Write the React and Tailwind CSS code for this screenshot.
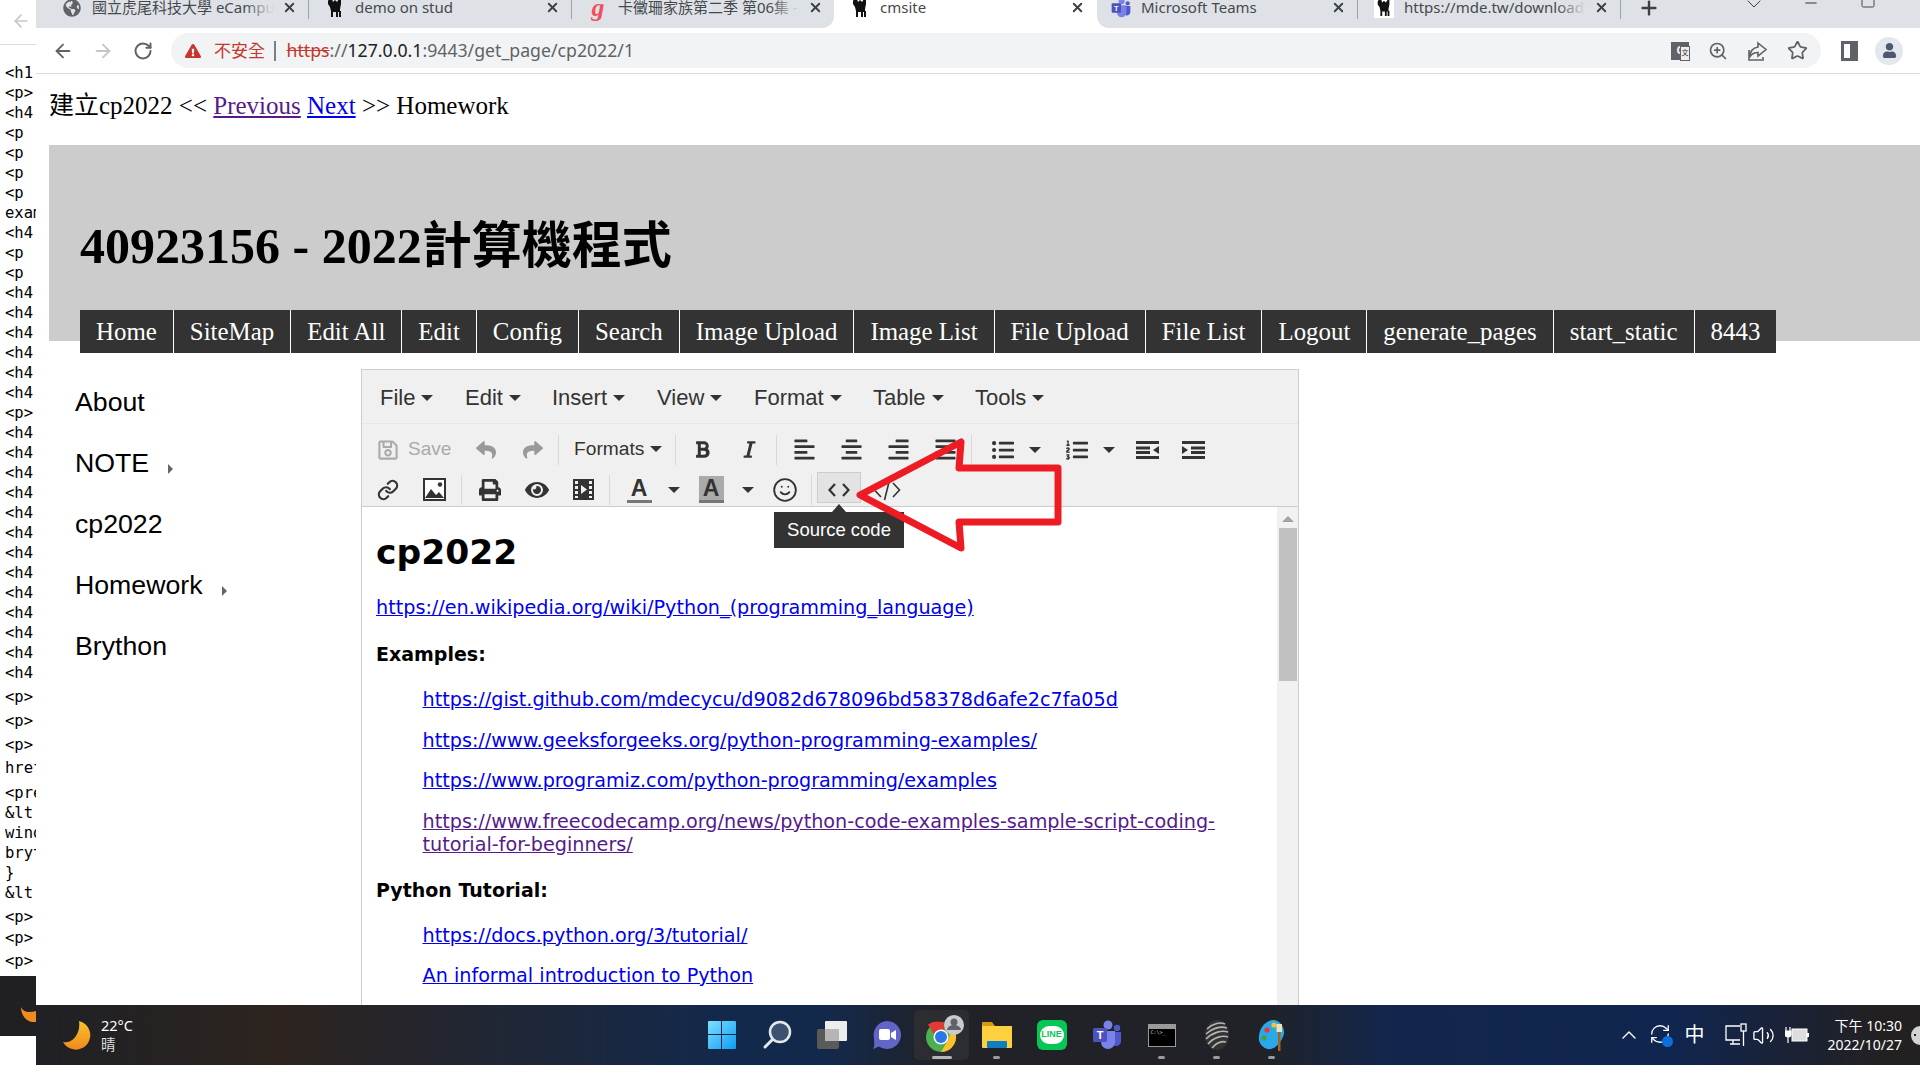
import { ArrowLeft, ArrowRight, RotateCw, RefreshCw, X, Plus, ChevronDown, Minus, Square, Link as LinkIcon, Smile, ZoomIn, Star, ChevronUp, Volume2 } from 'lucide-react'
import { FaBold, FaItalic, FaAlignLeft, FaAlignCenter, FaAlignRight, FaAlignJustify, FaListUl, FaListOl, FaReply, FaShare, FaPrint, FaEye, FaUser, FaExclamationTriangle, FaRegSave, FaGlobeAmericas } from 'react-icons/fa'

const sans = 'font-["Noto_Sans","Noto_Sans_CJK_TC",sans-serif]'

const STRIP_LINES = [
  ['<h1', ''], ['<p>', ''], ['<h4', ''], ['<p', ''], ['<p', ''], ['<p', ''], ['<p', ''], ['exam', ''],
  ['<h4', ''], ['<p', ''], ['<p', ''], ['<h4', ''], ['<h4', ''], ['<h4', ''], ['<h4', ''], ['<h4', ''], ['<h4', ''],
  ['<p>', ''], ['<h4', ''], ['<h4', ''], ['<h4', ''], ['<h4', ''], ['<h4', ''], ['<h4', ''], ['<h4', ''], ['<h4', ''],
  ['<h4', ''], ['<h4', ''], ['<h4', ''], ['<h4', ''], ['<h4', ''],
  ['<p>', 'mt-[4px]'], ['<p>', 'mt-[4px]'], ['<p>', 'mt-[4px]'], ['href', 'mt-[3px]'], ['<pre', 'mt-[5px]'],
  ['&lt', ''], ['wind', ''], ['bryt', ''], ['}', ''], ['&lt', ''],
  ['<p>', 'mt-[4px]'], ['<p>', 'mt-px'], ['<p>', 'mt-[3px]'],
]

const NAV = ['Home', 'SiteMap', 'Edit All', 'Edit', 'Config', 'Search', 'Image Upload', 'Image List', 'File Upload', 'File List', 'Logout', 'generate_pages', 'start_static', '8443']
const MENUS = [['File', 'w-[85px]'], ['Edit', 'w-[87px]'], ['Insert', 'w-[105px]'], ['View', 'w-[97px]'], ['Format', 'w-[119px]'], ['Table', 'w-[102px]'], ['Tools', 'w-[90px]']]
const SIDE = [['About', false], ['NOTE', true], ['cp2022', false], ['Homework', true], ['Brython', false]]

function Camel({ size = 20 }) {
  return (
    <svg width={size} height={size} viewBox="0 0 20 20" fill="#111">
      <path d="M4 1h3l1 3 2-2 2 2 2-3h2v5l-1 5v2h1v6h-2v-5h-1v5h-2v-5H8v5H6v-6L5 9 3 6V3z" />
    </svg>
  )
}

function TeamsIcon({ size = 24 }) {
  return (
    <svg width={size} height={size} viewBox="0 0 30 30">
      <circle cx="16" cy="5" r="4.5" fill="#7b83eb" />
      <circle cx="25" cy="8" r="3.2" fill="#5059c9" />
      <path d="M20 12h9v9a5 5 0 0 1-9 3z" fill="#5059c9" />
      <path d="M9 11h14v11a7 7 0 0 1-14 0z" fill="#7b83eb" />
      <rect x="1" y="8" width="14" height="14" rx="1.5" fill="#4b53bc" />
      <text x="8" y="19" textAnchor="middle" fontSize="11" fontWeight="700" fill="#fff" fontFamily="Liberation Sans">T</text>
    </svg>
  )
}

function Tab({ icon, title, dim, noSep, cls = '' }) {
  return (
    <div className={`relative flex h-[15px] w-[263px] shrink-0 items-center ${cls}`}>
      <span className="absolute left-[16px] flex h-5 w-5 items-center justify-center">{icon}</span>
      <span className={`absolute left-[46px] w-[182px] overflow-hidden text-[15px] leading-[17px] whitespace-nowrap text-[#45494e] ${sans}`}>{title}</span>
      {dim && <span className="absolute left-[198px] h-[17px] w-[30px] bg-gradient-to-r from-transparent to-[#dee1e6]" />}
      <X size={15} strokeWidth={3} className="absolute left-[236px] text-[#3c4043]" />
      {!noSep && <span className="absolute right-0 top-0 h-[19px] w-px bg-[#9aa0a6]" />}
    </div>
  )
}

function TabBar() {
  return (
    <div className="flex h-[28px] shrink-0 bg-white">
      <div className="flex w-[798px] rounded-br-[12px] bg-[#dee1e6] pl-[10px]">
        <Tab icon={<FaGlobeAmericas size={18} className="text-[#5f6368]" />} title="國立虎尾科技大學 eCampus" dim />
        <Tab icon={<Camel />} title="demo on stud" />
        <Tab
          icon={<span className="font-['Liberation_Serif'] text-[26px] leading-none font-bold italic text-[#f0505e]">g</span>}
          title="卡黴珊家族第二季 第06集 - 動漫"
          dim
          noSep
        />
      </div>
      <div className="relative flex w-[263px] shrink-0 bg-white">
        <Tab icon={<Camel />} title="cmsite" noSep />
      </div>
      <div className="flex flex-1 rounded-bl-[12px] bg-[#dee1e6]">
        <Tab icon={<TeamsIcon size={22} />} title="Microsoft Teams" cls="-ml-[2px]" />
        <Tab icon={<span className="flex h-5 w-5 items-center justify-center bg-white"><Camel size={18} /></span>} title="https://mde.tw/downloads" dim />
        <Plus size={22} strokeWidth={2.6} className="ml-[17px] mt-[-3px] text-[#3c4043]" />
        <ChevronDown size={24} strokeWidth={1} className="ml-[82px] mt-[-8px] text-[#3c4043]" />
        <Minus size={18} strokeWidth={1.2} className="ml-[36px] mt-[-6px] text-[#222]" />
        <Square size={16} strokeWidth={1.2} className="ml-[40px] mt-[-7px] text-[#222]" />
      </div>
    </div>
  )
}

function AddressBar() {
  return (
    <div className="flex h-[46px] shrink-0 items-center border-b-[1.5px] border-[#dadce0] bg-white">
      <div className="flex w-[135px] shrink-0 items-center pl-[16px] text-[#5f6368]">
        <ArrowLeft size={22} strokeWidth={2} />
        <ArrowRight size={22} strokeWidth={2} className="ml-[18px] text-[#c4c7c9]" />
        <RotateCw size={20} strokeWidth={2.4} className="ml-[19px]" />
      </div>
      <div className="flex h-[35px] w-[1650px] shrink-0 items-center rounded-full bg-[#f1f3f4] pl-[14px] text-[18px] whitespace-nowrap">
        <FaExclamationTriangle size={16} className="text-[#c5372c]" />
        <span className={`ml-[13px] text-[17px] text-[#c5372c] ${sans}`}>不安全</span>
        <span className="ml-[9px] h-[20px] w-[1.5px] bg-[#7b7f83]" />
        <span className={`ml-[11px] text-[17.7px] ${sans}`}>
          <span className="text-[#c5372c] line-through">https</span>
          <span className="text-[#5f6368]">://</span>
          <span className="text-[#202124]">127.0.0.1</span>
          <span className="text-[#5f6368]">:9443/get_page/cp2022/1</span>
        </span>
        <span className="ml-auto flex items-center gap-[19px] pr-[13px] text-[#5f6368]">
          <span className={`relative flex h-[18px] w-[18px] items-center justify-center bg-[#5f6368] text-[10px] font-bold text-white ${sans}`}>
            G
            <span className="absolute left-[9px] top-[4px] flex h-[15px] w-[10px] items-center justify-center border border-[#5f6368] bg-[#eee] text-[7px] font-normal text-[#333]">文</span>
          </span>
          <ZoomIn size={20} strokeWidth={2} />
          <svg width="21" height="20" viewBox="0 0 21 20" fill="none" stroke="currentColor" strokeWidth="1.600">
            <path d="M2 9v10h14v-3M11 2l8 6.500-8 6.500v-3.500c-4 0-6 1-8 4 0-5 3-8.500 8-9.500z" />
          </svg>
          <Star size={21} strokeWidth={2} />
        </span>
      </div>
      <span className="ml-[20px] h-[20px] w-[17px] shrink-0 border-[3px] border-r-[8px] border-[#5f6368] bg-white" />
      <span className="ml-[17px] flex h-[28px] w-[28px] shrink-0 items-center justify-center rounded-full bg-[#e4e7ec] text-[#4c5872]">
        <FaUser size={15} />
      </span>
    </div>
  )
}

function LeftStrip() {
  return (
    <div className="flex h-screen w-[36px] shrink-0 flex-col overflow-hidden bg-white">
      <div className="flex h-[45px] shrink-0 items-start justify-center border-b-[1.5px] border-[#dadce0] pl-[6px] pt-[11px]">
        <ArrowLeft size={20} strokeWidth={2} className="text-[#c4c7c9]" />
      </div>
      <div className="mt-[18px] flex flex-col pl-[5px] font-['DejaVu_Sans_Mono',monospace] text-[15.5px] leading-[20px] text-black">
        {STRIP_LINES.map(([text, cls], i) => (
          <div key={i} className={`h-[20px] w-[31px] overflow-hidden whitespace-nowrap ${cls}`}>{text}</div>
        ))}
      </div>
      <div className="mt-[5px] h-[60px] shrink-0 overflow-hidden bg-[#202024]">
        <svg width="36" height="60" viewBox="0 0 36 60">
          <path d="M21 31c2 5 7 6 15 4v11c-8 1-15-5-15-15z" fill="#f08c1e" />
        </svg>
      </div>
    </div>
  )
}

function Caret() {
  return <span className="ml-[6px] h-0 w-0 border-x-[6px] border-t-[6px] border-x-transparent border-t-[#333]" />
}

function Sep({ cls }) {
  return <span className={`h-[30px] w-px shrink-0 bg-[#d9d9d9] ${cls}`} />
}

function Tool({ children, cls = '' }) {
  return <span className={`flex h-[31px] w-[47px] shrink-0 items-center justify-center text-[#333] ${cls}`}>{children}</span>
}

function DropCaret({ cls = '' }) {
  return (
    <span className={`flex h-[31px] w-[18px] shrink-0 items-center justify-center ${cls}`}>
      <span className="h-0 w-0 border-x-[6px] border-t-[6px] border-x-transparent border-t-[#333]" />
    </span>
  )
}

function IndentIcon({ out }) {
  return (
    <svg width="23" height="20" viewBox="0 0 23 20" fill="#333">
      <rect x="0" y="1" width="23" height="3" />
      <rect x={out ? 0 : 9} y="6.500" width="14" height="3" />
      <rect x={out ? 0 : 9} y="11" width="14" height="3" />
      <rect x="0" y="16" width="23" height="3" />
      {out ? <path d="M23 6v8l-6-4z" /> : <path d="M0 6v8l6-4z" />}
    </svg>
  )
}

function Toolbar() {
  return (
    <div className="relative flex h-[83px] flex-col border-b-[1.5px] border-[#ccc] pt-[10px]">
      <div className="flex h-[31px] items-center">
        <span className="flex w-[100px] shrink-0 items-center pl-[15px] text-[#aaa]">
          <FaRegSave size={22} />
          <span className="ml-[9px] font-['Liberation_Sans'] text-[19px]">Save</span>
        </span>
        <Tool><FaReply size={20} className="text-[#999]" /></Tool>
        <Tool><FaShare size={20} className="text-[#999]" /></Tool>
        <Sep cls="ml-[2px]" />
        <span className="flex w-[116px] shrink-0 items-center pl-[15px] font-['Liberation_Sans'] text-[19.2px] text-[#333]">
          Formats<Caret />
        </span>
        <Sep />
        <Tool cls="ml-[3px]"><FaBold size={19} /></Tool>
        <Tool><FaItalic size={19} /></Tool>
        <Sep cls="ml-[3px]" />
        <Tool cls="ml-[4px]"><FaAlignLeft size={23} /></Tool>
        <Tool><FaAlignCenter size={23} /></Tool>
        <Tool><FaAlignRight size={23} /></Tool>
        <Tool><FaAlignJustify size={23} /></Tool>
        <Sep cls="ml-[2px]" />
        <Tool cls="ml-[7px]"><FaListUl size={22} /></Tool>
        <DropCaret />
        <Tool cls="ml-[9px]"><FaListOl size={22} /></Tool>
        <DropCaret />
        <Tool cls="ml-[6px]"><IndentIcon out /></Tool>
        <Tool cls="-ml-px"><IndentIcon /></Tool>
      </div>
      <div className="mt-[9px] flex h-[31px] items-center">
        <Tool cls="ml-[2px]"><LinkIcon size={22} strokeWidth={2.4} /></Tool>
        <Tool>
          <svg width="23" height="23" viewBox="0 0 23 23">
            <rect x="1" y="1" width="21" height="21" fill="#fff" stroke="#333" strokeWidth="2" />
            <path d="M2 20l6-9 5 6 3-3 5 6z" fill="#333" />
            <circle cx="17" cy="6.5" r="2.2" fill="#333" />
          </svg>
        </Tool>
        <Sep cls="ml-[3px]" />
        <Tool cls="ml-[4px]"><FaPrint size={22} /></Tool>
        <Tool><FaEye size={24} /></Tool>
        <Tool>
          <svg width="23" height="23" viewBox="0 0 23 23" fill="#333">
            <path d="M1 1h21v21H1zM3 3v3h3V3zm0 5v3h3V8zm0 5v3h3v-3zm0 5v2h3v-2zM17 3v3h3V3zm0 5v3h3V8zm0 5v3h3v-3zm0 5v2h3v-2zM9 7v9l6-4.500z" fillRule="evenodd" />
          </svg>
        </Tool>
        <Sep cls="ml-[2px]" />
        <span className="ml-[5px] flex h-[31px] w-[48px] shrink-0 items-center justify-center">
          <span className="flex h-[27px] w-[25px] items-center justify-center border-b-[3px] border-[#777] font-['Liberation_Sans'] text-[23px] leading-none font-bold text-[#333]">A</span>
        </span>
        <DropCaret cls="ml-[2px]" />
        <span className="ml-[4px] flex h-[31px] w-[48px] shrink-0 items-center justify-center">
          <span className="flex h-[27px] w-[25px] items-center justify-center border-b-[3px] border-[#777] bg-[#aaa] font-['Liberation_Sans'] text-[23px] leading-none font-bold text-[#333]">A</span>
        </span>
        <DropCaret cls="ml-[4px]" />
        <Tool cls="ml-[4px]"><Smile size={26} strokeWidth={1.7} /></Tool>
        <Sep cls="ml-[3px]" />
        <span className="relative ml-[5px] -mt-[5px] flex h-[31px] w-[44px] shrink-0 items-center justify-center border border-[#ccc] bg-[#e3e3e3] pt-[5px]">
          <svg width="22" height="14" viewBox="0 0 22 14" fill="none" stroke="#333" strokeWidth="2.2">
            <path d="M7 1 1.500 7 7 13M15 1l5.500 6L15 13" />
          </svg>
          <span className="absolute left-[-44px] top-[39px] flex h-[36px] w-[130px] items-center justify-center bg-[#333] font-['Liberation_Sans'] text-[18.500px] text-white">
            Source code
          </span>
          <span className="absolute left-[14px] top-[31px] h-0 w-0 border-x-[7px] border-b-[8px] border-x-transparent border-b-[#333]" />
        </span>
        <Tool cls="ml-[2px]">
          <svg width="28" height="22" viewBox="0 0 28 22" fill="none" stroke="#333" strokeWidth="1.6">
            <path d="M8 4 1.500 11 8 18M20 4l6.500 7-6.500 7M16.500 1l-5 20" />
          </svg>
        </Tool>
      </div>
    </div>
  )
}

function A({ children, visited }) {
  return <a className={`text-[19.2px] underline ${visited ? 'text-[#551a8b]' : 'text-[#0000ee]'}`}>{children}</a>
}

function Editor() {
  return (
    <div className="relative w-[938px] shrink-0 border-[1.5px] border-[#ccc] bg-white">
      <div className="bg-[#f0f0f0]">
        <div className="flex h-[54px] items-center border-b-[1.5px] border-[#e6e6e6] pl-[18px] pt-[2px] font-['Liberation_Sans'] text-[22px] text-[#333]">
          {MENUS.map(([m, w]) => (
            <span key={m} className={`flex shrink-0 items-center ${w}`}>{m}<Caret /></span>
          ))}
        </div>
        <Toolbar />
      </div>
      <div className="flex">
        <div className="min-w-0 flex-1 pl-[14px] pt-[25px] font-['DejaVu_Sans',sans-serif] text-[19px] leading-[23px] text-black">
          <h1 className="text-[34.500px] leading-[40px] font-bold">cp2022</h1>
          <p className="mt-[24px]"><A>https://en.wikipedia.org/wiki/Python_(programming_language)</A></p>
          <p className="mt-[24px] font-bold">Examples:</p>
          <ul className="mt-[22px] flex flex-col gap-[17.500px] pl-[46.500px]">
            <li><A>https://gist.github.com/mdecycu/d9082d678096bd58378d6afe2c7fa05d</A></li>
            <li><A>https://www.geeksforgeeks.org/python-programming-examples/</A></li>
            <li><A>https://www.programiz.com/python-programming/examples</A></li>
            <li><A visited>https://www.freecodecamp.org/news/python-code-examples-sample-script-coding-<br />tutorial-for-beginners/</A></li>
          </ul>
          <p className="mt-[23px] font-bold">Python Tutorial:</p>
          <ul className="mt-[22px] flex flex-col gap-[17.500px] pl-[46.500px]">
            <li><A>https://docs.python.org/3/tutorial/</A></li>
            <li><A>An informal introduction to Python</A></li>
          </ul>
        </div>
        <div className="flex w-[21px] shrink-0 flex-col items-center bg-[#f1f1f1] pt-[9px]">
          <span className="h-0 w-0 border-x-[6px] border-b-[6px] border-x-transparent border-b-[#a3a3a3]" />
          <span className="mt-[6px] h-[153px] w-[18px] bg-[#c1c1c1]" />
          <span className="h-[400px]" />
        </div>
      </div>
      <svg className="absolute left-[492.5px] top-[64.5px]" width="210" height="120" viewBox="0 0 210 120" fill="none">
        <path d="M5 60 106 7 104 33H203V87H104L106 113Z" stroke="#ed1c24" strokeWidth="7" strokeLinejoin="round" />
      </svg>
    </div>
  )
}

function Page() {
  return (
    <div className="min-h-0 flex-1 overflow-hidden bg-white font-['Liberation_Serif','Noto_Sans_CJK_TC',serif] text-black">
      <div className="flex h-[71px] items-center pb-[7px] pl-[13px] text-[25px]">
        <span>建立cp2022 &lt;&lt; <a className="text-[#551a8b] underline">Previous</a> <a className="text-[#0000ee] underline">Next</a> &gt;&gt; Homework</span>
      </div>
      <div className="ml-[13px] flex h-[196px] flex-col bg-[#cccccc] pl-[31px]">
        <h1 className="mt-[72px] text-[50px] leading-[58px] font-bold">40923156 - 2022計算機程式</h1>
        <nav className="mb-[-12px] mt-auto flex h-[43px] w-fit items-center bg-[#333] text-[24.9px] text-white">
          {NAV.map((n, i) => (
            <span key={n} className={`flex h-full items-center px-4 whitespace-nowrap ${i < NAV.length - 1 ? 'border-r border-white' : ''}`}>{n}</span>
          ))}
        </nav>
      </div>
      <div className="flex pt-[28px]">
        <div className="w-[325px] shrink-0 pl-[39px] pt-[3px] font-['Liberation_Sans',sans-serif] text-[26.7px]">
          {SIDE.map(([s, sub]) => (
            <div key={s} className="flex h-[61px] items-center">
              {s}
              {sub && <span className="ml-[19px] mt-[10px] h-0 w-0 border-y-[5px] border-l-[5px] border-y-transparent border-l-[#666]" />}
            </div>
          ))}
        </div>
        <Editor />
      </div>
    </div>
  )
}

function TaskIcon({ children, dot, active }) {
  return (
    <div className={`relative flex h-[50px] w-[55px] shrink-0 items-center justify-center ${active ? 'rounded-[5px] bg-[#2c2d31]' : ''}`}>
      {children}
      {dot && <span className={`absolute bottom-[1px] h-[3px] rounded-full ${active ? 'w-[20px] bg-[#b5b5b5]' : 'w-[7px] bg-[#9a9a9a]'}`} />}
    </div>
  )
}

function Taskbar() {
  return (
    <div className="flex h-[60px] shrink-0 items-center bg-[linear-gradient(90deg,#1f2025_0%,#2d241f_13%,#13294b_36%,#13294b_42%,#202227_48%,#202227_65%,#12264d_72%,#10254f_87%,#232021_98%)]">
      <div className={`flex w-[658px] shrink-0 items-center pl-[26px] text-white ${sans}`}>
        <svg width="30" height="30" viewBox="0 0 30 30">
          <defs>
            <linearGradient id="moon" x1="0" y1="0" x2="0" y2="1"><stop offset="0" stopColor="#f8c22c" /><stop offset="1" stopColor="#ef8a1c" /></linearGradient>
          </defs>
          <path d="M17 1A14.500 14.500 0 1 1 1 22C10 24 19 14 17 1Z" fill="url(#moon)" />
        </svg>
        <div className="ml-[9px] flex flex-col text-[14.500px] leading-[19px]">
          <span>22°C</span>
          <span className="text-[#ddd]">晴</span>
        </div>
      </div>
      <div className="flex items-center">
        <TaskIcon>
          <svg width="30" height="30" viewBox="0 0 30 30">
            <defs>
              <linearGradient id="win" x1="0" y1="0" x2="1" y2="1"><stop offset="0" stopColor="#7fe0ff" /><stop offset="1" stopColor="#0d9bf5" /></linearGradient>
            </defs>
            <path d="M1 2a1 1 0 0 1 1-1h12v13H1zM15 1h13a1 1 0 0 1 1 1v12H15zM1 15h13v14H2a1 1 0 0 1-1-1zM15 15h14v13a1 1 0 0 1-1 1H15z" fill="url(#win)" />
          </svg>
        </TaskIcon>
        <TaskIcon>
          <svg width="30" height="30" viewBox="0 0 30 30">
            <circle cx="18" cy="12" r="10" fill="#3d5170" stroke="#e6e9ec" strokeWidth="2.500" />
            <path d="M10 20 3 27" stroke="#e6e9ec" strokeWidth="3" strokeLinecap="round" />
          </svg>
        </TaskIcon>
        <TaskIcon>
          <svg width="32" height="30" viewBox="0 0 32 30">
            <rect x="1" y="9" width="22" height="20" rx="2" fill="#5a5a5a" />
            <rect x="9" y="1" width="22" height="20" rx="1" fill="#ededed" />
            <rect x="9" y="9" width="14" height="12" fill="#b5b5b5" />
          </svg>
        </TaskIcon>
        <TaskIcon>
          <svg width="30" height="30" viewBox="0 0 30 30">
            <path d="M15 1a14 14 0 1 1-8 25.500L1 29c2-3 1-6 1-11A14 14 0 0 1 15 1z" fill="#6264c8" />
            <rect x="7" y="9" width="11" height="11" rx="2" fill="#fff" />
            <path d="M19 13l5-3v10l-5-3z" fill="#fff" />
          </svg>
        </TaskIcon>
        <TaskIcon active dot>
          <svg width="46" height="40" viewBox="0 0 46 40">
            <circle cx="22" cy="22" r="15" fill="#4caf50" />
            <path d="M22 7a15 15 0 0 1 13 7.500H22a7.500 7.500 0 0 0-7 5L9 9.500A15 15 0 0 1 22 7z" fill="#e53935" />
            <path d="M35 14.500A15 15 0 0 1 22 37l7-12a7.500 7.500 0 0 0-1-10.500z" fill="#fbc02d" />
            <circle cx="22" cy="22" r="7.500" fill="#fff" />
            <circle cx="22" cy="22" r="6" fill="#2a78e4" />
            <circle cx="35" cy="10" r="10" fill="#c9cbce" />
            <circle cx="35" cy="7" r="3.500" fill="#5f6368" />
            <path d="M28 15a7 5 0 0 1 14 0z" fill="#5f6368" />
          </svg>
        </TaskIcon>
        <TaskIcon dot>
          <svg width="32" height="28" viewBox="0 0 32 28">
            <path d="M1 2a1 1 0 0 1 1-1h9l3 4H1z" fill="#d99a0b" />
            <path d="M1 5h30v21a1 1 0 0 1-1 1H2a1 1 0 0 1-1-1z" fill="#fcd03f" />
            <rect x="6" y="20" width="20" height="7" rx="1" fill="#0f7cc4" />
          </svg>
        </TaskIcon>
        <TaskIcon>
          <span className="relative flex h-[30px] w-[30px] items-center justify-center rounded-[6px] bg-[#06c755]">
            <span className="flex h-[18px] w-[24px] items-center justify-center rounded-full bg-white font-['Liberation_Sans'] text-[9px] font-bold text-[#06c755]">LINE</span>
          </span>
        </TaskIcon>
        <TaskIcon><TeamsIcon size={30} /></TaskIcon>
        <TaskIcon dot>
          <span className="h-[23px] w-[28px] border-[1.5px] border-t-[5px] border-[#9a9a9a] bg-black pl-[2px] pt-[1px] font-['DejaVu_Sans_Mono'] text-[5px] leading-[5px] text-[#ccc]">C:\&gt;_</span>
        </TaskIcon>
        <TaskIcon dot>
          <svg width="26" height="32" viewBox="0 0 26 32" fill="none">
            <ellipse cx="13" cy="16" rx="12" ry="15" fill="#333" />
            <path d="M3 10c6-6 14-7 18-5M2 15c7-6 15-8 21-6M2 20c7-7 16-9 22-7M4 25c6-7 15-9 20-7M8 29c5-6 10-7 14-6" stroke="#b5b5b5" strokeWidth="1.600" />
          </svg>
        </TaskIcon>
        <TaskIcon dot>
          <svg width="28" height="32" viewBox="0 0 28 32">
            <path d="M14 1C5 3 0 12 1 21c1 6 7 10 12 9 5-1 11-8 13-15C27 8 21 0 14 1z" fill="#2aa8e8" />
            <circle cx="9" cy="11" r="2.600" fill="#e53935" />
            <circle cx="16" cy="6" r="2.600" fill="#fbc02d" />
            <circle cx="6" cy="19" r="2.600" fill="#43a047" />
            <rect x="20" y="12" width="2.500" height="20" fill="#a5651e" />
            <rect x="18.500" y="5" width="5.500" height="8" fill="#f2dfb8" />
          </svg>
        </TaskIcon>
      </div>
      <div className={`ml-auto flex items-center text-white ${sans}`}>
        <ChevronUp size={24} strokeWidth={1.4} />
        <span className="relative ml-[8px] flex h-[24px] w-[24px]">
          <RefreshCw size={22} strokeWidth={1.4} />
          <span className="absolute bottom-0 right-0 h-[11px] w-[11px] rounded-full bg-[#0b6fe0]" />
        </span>
        <span className="ml-[12px] text-[20px] leading-none">中</span>
        <svg className="ml-[20px]" width="23" height="24" viewBox="0 0 23 24" fill="none" stroke="#fff" strokeWidth="1.300">
          <path d="M15 3H1v14h14M5 21h10M8 17v4" />
          <rect x="16" y="1" width="5" height="7" />
          <path d="M18.500 8v15" />
        </svg>
        <Volume2 size={23} strokeWidth={1.4} className="ml-[4px]" />
        <svg className="ml-[10px]" width="24" height="18" viewBox="0 0 24 18">
          <rect x="7" y="3" width="15" height="12" fill="#ddd" stroke="#fff" />
          <rect x="22" y="7" width="2" height="4" fill="#fff" />
          <path d="M1 1v4M5 1v4M0 5h6v3a3 3 0 0 1-6 0zM3 11v6" stroke="#fff" strokeWidth="1.200" fill="#fff" />
        </svg>
        <div className="ml-[19px] flex flex-col items-end text-[14px] leading-[19px]">
          <span>下午 10:30</span>
          <span>2022/10/27</span>
        </div>
        <span className="ml-[9px] mr-[-10px] flex h-[19px] w-[19px] shrink-0 items-center rounded-full bg-[#d4d4d4] pl-[3px]">
          <span className="h-[2px] w-[2px] bg-[#222]" />
        </span>
      </div>
    </div>
  )
}

export default function App() {
  return (
    <div className="flex h-screen w-screen overflow-hidden bg-white">
      <LeftStrip />
      <div className="flex h-screen min-w-0 flex-1 flex-col">
        <TabBar />
        <AddressBar />
        <Page />
        <Taskbar />
        <div className="h-[15px] shrink-0 bg-white" />
      </div>
    </div>
  )
}
